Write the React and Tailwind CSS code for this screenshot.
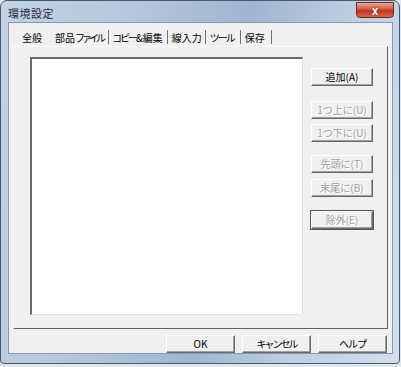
// App.jsx — 環境設定 dialog (Windows 7 aero style)

const FONT = "font-['Noto_Sans_CJK_JP','Noto_Sans',sans-serif]"

function Btn({ children, disabled, focused, className = '' }) {
  return (
    <div
      className={`h-[18px] flex items-center justify-center whitespace-nowrap text-[10px] leading-none bg-[#f0f0f0] border border-t-white border-l-white border-r-[#696969] border-b-[#696969] shadow-[inset_-1px_-1px_0_#a0a0a0] ${
        disabled ? 'text-[#a0a0a0] [text-shadow:1px_1px_0_#ffffff]' : 'text-black'
      } ${focused ? 'outline outline-1 outline-[#555]' : ''} ${className}`}
    >
      {children}
    </div>
  )
}

function Sep({ className = '' }) {
  return <span className={`w-px h-[14px] bg-[#707070] ${className}`} />
}

export default function App() {
  return (
    <div className={`w-[401px] h-[367px] bg-[#dfe6ee] ${FONT}`}>
      <div className="w-[400px] h-[364px] rounded-t-[7px] rounded-b-[4px] border border-[#4a5868] bg-[linear-gradient(100deg,#c3d3e5_0%,#b4c6dc_30%,#9fb5d0_55%,#bccde1_75%,#d3dfec_100%)] flex flex-col">
        {/* title bar */}
        <div className="h-[20px] flex items-center justify-between pl-[7px] pr-[5px]">
          <span className="text-[11px] text-[#1e2a38] tracking-[0.5px] mt-[4px]">環境設定</span>
          <div className="w-[38px] h-[16px] -mt-[2px] rounded-b-[4px] border border-[#6b2a20] bg-[linear-gradient(#e8a89b_0%,#d0573f_45%,#c0341c_55%,#d8664a_100%)] flex items-center justify-center">
            <span className="text-white text-[11px] font-bold leading-none [text-shadow:0_0_2px_#5a0f05]">x</span>
          </div>
        </div>

        {/* client area */}
        <div className="ml-[7px] mt-[1px] w-[385px] h-[332px] bg-[#f0f0f0] border border-[#8798ae] flex flex-col">
          {/* tabs */}
          <div className="h-[23px] flex items-end pl-[13px] text-[10px] text-black whitespace-nowrap">
            <div className="flex items-center h-[17px]">
              <span>全般</span>
              <span className="ml-[13px]">部品<span className="tracking-[-3px]">ファイル</span></span>
              <Sep className="ml-[5px]" />
              <span className="ml-[3px]"><span className="tracking-[-2px]">コピー</span>&amp;編集</span>
              <Sep className="ml-[4px]" />
              <span className="ml-[4px]">線入力</span>
              <Sep className="ml-[3px]" />
              <span className="ml-[4px] tracking-[-2px]">ツール</span>
              <Sep className="ml-[6px]" />
              <span className="ml-[4px]">保存</span>
              <Sep className="ml-[6px]" />
            </div>
          </div>

          {/* tab panel */}
          <div className="ml-[4px] w-[375px] h-[284px] border border-t-[#fafafa] border-l-[#fafafa] border-r-[#5f5f5f] border-b-[#5f5f5f] flex">
            <div className="ml-[16px] mt-[10px] w-[273px] h-[258px] bg-white border-t-2 border-l-2 border-t-[#6a6a6a] border-l-[#6a6a6a] border-r border-b border-r-[#e4e4e4] border-b-[#e4e4e4]" />
            <div className="ml-[8px] w-[62px] flex flex-col">
              <Btn className="mt-[21px]">追加(A)</Btn>
              <Btn disabled className="mt-[15px]">1つ上に(U)</Btn>
              <Btn disabled className="mt-[5px]">1つ下に(U)</Btn>
              <Btn disabled className="mt-[13px]">先頭に(T)</Btn>
              <Btn disabled className="mt-[6px]">末尾に(B)</Btn>
              <Btn disabled focused className="mt-[14px]">除外(E)</Btn>
            </div>
          </div>

          {/* footer buttons */}
          <div className="flex justify-end gap-[7px] pr-[5px] mt-[6px]">
            <Btn className="w-[69px]">OK</Btn>
            <Btn className="w-[69px]"><span className="tracking-[-2px]">キャンセル</span></Btn>
            <Btn className="w-[69px]"><span className="tracking-[-1px]">ヘルプ</span></Btn>
          </div>
        </div>
      </div>
    </div>
  )
}
